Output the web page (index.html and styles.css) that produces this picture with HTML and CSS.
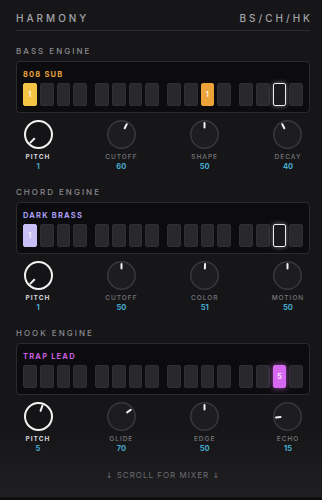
FILE: index.html
```html
<!DOCTYPE html>
<html lang="en">
<head>
    <meta charset="UTF-8">
    <meta name="viewport" content="width=device-width, initial-scale=1.0">
    <title>Harmony</title>
    <link rel="stylesheet" href="styles.css">
</head>
<body>
    <div class="app">
        <header class="top">
            <span>HARMONY</span>
            <span>BS/CH/HK</span>
        </header>

        <section class="engine">
            <h3 class="engine-title">BASS ENGINE</h3>
            <div class="pattern">
                <div class="patch bass">808 SUB</div>
                <div class="steps">
                    <div class="group"><div class="step yellow">1</div><div class="step"></div><div class="step"></div><div class="step"></div></div>
                    <div class="group"><div class="step"></div><div class="step"></div><div class="step"></div><div class="step"></div></div>
                    <div class="group"><div class="step"></div><div class="step"></div><div class="step orange">1</div><div class="step"></div></div>
                    <div class="group"><div class="step"></div><div class="step"></div><div class="step playhead"></div><div class="step"></div></div>
                </div>
            </div>
            <div class="knobs">
                <div class="knob active">
                    <svg viewBox="0 0 29 29"><circle cx="14.5" cy="14.5" r="13.5"/><line x1="14.5" y1="3" x2="14.5" y2="8.5" transform="rotate(-135 14.5 14.5)"/></svg>
                    <span class="k-label">PITCH</span><span class="k-value">1</span>
                </div>
                <div class="knob">
                    <svg viewBox="0 0 29 29"><circle cx="14.5" cy="14.5" r="13.75"/><line x1="14.5" y1="3" x2="14.5" y2="7.5" transform="rotate(27 14.5 14.5)"/></svg>
                    <span class="k-label">CUTOFF</span><span class="k-value">60</span>
                </div>
                <div class="knob">
                    <svg viewBox="0 0 29 29"><circle cx="14.5" cy="14.5" r="13.75"/><line x1="14.5" y1="3" x2="14.5" y2="7.5"/></svg>
                    <span class="k-label">SHAPE</span><span class="k-value">50</span>
                </div>
                <div class="knob">
                    <svg viewBox="0 0 29 29"><circle cx="14.5" cy="14.5" r="13.75"/><line x1="14.5" y1="3" x2="14.5" y2="7.5" transform="rotate(-27 14.5 14.5)"/></svg>
                    <span class="k-label">DECAY</span><span class="k-value">40</span>
                </div>
            </div>
        </section>

        <section class="engine">
            <h3 class="engine-title">CHORD ENGINE</h3>
            <div class="pattern">
                <div class="patch chord">DARK BRASS</div>
                <div class="steps">
                    <div class="group"><div class="step lavender">1</div><div class="step"></div><div class="step"></div><div class="step"></div></div>
                    <div class="group"><div class="step"></div><div class="step"></div><div class="step"></div><div class="step"></div></div>
                    <div class="group"><div class="step"></div><div class="step"></div><div class="step"></div><div class="step"></div></div>
                    <div class="group"><div class="step"></div><div class="step"></div><div class="step playhead"></div><div class="step"></div></div>
                </div>
            </div>
            <div class="knobs">
                <div class="knob active">
                    <svg viewBox="0 0 29 29"><circle cx="14.5" cy="14.5" r="13.5"/><line x1="14.5" y1="3" x2="14.5" y2="8.5" transform="rotate(-135 14.5 14.5)"/></svg>
                    <span class="k-label">PITCH</span><span class="k-value">1</span>
                </div>
                <div class="knob">
                    <svg viewBox="0 0 29 29"><circle cx="14.5" cy="14.5" r="13.75"/><line x1="14.5" y1="3" x2="14.5" y2="7.5"/></svg>
                    <span class="k-label">CUTOFF</span><span class="k-value">50</span>
                </div>
                <div class="knob">
                    <svg viewBox="0 0 29 29"><circle cx="14.5" cy="14.5" r="13.75"/><line x1="14.5" y1="3" x2="14.5" y2="7.5" transform="rotate(3 14.5 14.5)"/></svg>
                    <span class="k-label">COLOR</span><span class="k-value">51</span>
                </div>
                <div class="knob">
                    <svg viewBox="0 0 29 29"><circle cx="14.5" cy="14.5" r="13.75"/><line x1="14.5" y1="3" x2="14.5" y2="7.5"/></svg>
                    <span class="k-label">MOTION</span><span class="k-value">50</span>
                </div>
            </div>
        </section>

        <section class="engine">
            <h3 class="engine-title">HOOK ENGINE</h3>
            <div class="pattern">
                <div class="patch hook">TRAP LEAD</div>
                <div class="steps">
                    <div class="group"><div class="step"></div><div class="step"></div><div class="step"></div><div class="step"></div></div>
                    <div class="group"><div class="step"></div><div class="step"></div><div class="step"></div><div class="step"></div></div>
                    <div class="group"><div class="step"></div><div class="step"></div><div class="step"></div><div class="step"></div></div>
                    <div class="group"><div class="step"></div><div class="step"></div><div class="step magenta">5</div><div class="step"></div></div>
                </div>
            </div>
            <div class="knobs">
                <div class="knob active">
                    <svg viewBox="0 0 29 29"><circle cx="14.5" cy="14.5" r="13.5"/><line x1="14.5" y1="3" x2="14.5" y2="8.5" transform="rotate(20 14.5 14.5)"/></svg>
                    <span class="k-label">PITCH</span><span class="k-value">5</span>
                </div>
                <div class="knob">
                    <svg viewBox="0 0 29 29"><circle cx="14.5" cy="14.5" r="13.75"/><line x1="14.5" y1="3" x2="14.5" y2="7.5" transform="rotate(54 14.5 14.5)"/></svg>
                    <span class="k-label">GLIDE</span><span class="k-value">70</span>
                </div>
                <div class="knob">
                    <svg viewBox="0 0 29 29"><circle cx="14.5" cy="14.5" r="13.75"/><line x1="14.5" y1="3" x2="14.5" y2="7.5"/></svg>
                    <span class="k-label">EDGE</span><span class="k-value">50</span>
                </div>
                <div class="knob">
                    <svg viewBox="0 0 29 29"><circle cx="14.5" cy="14.5" r="13.75"/><line x1="14.5" y1="3" x2="14.5" y2="7.5" transform="rotate(-95 14.5 14.5)"/></svg>
                    <span class="k-label">ECHO</span><span class="k-value">15</span>
                </div>
            </div>
        </section>

        <div class="scroll-hint"><span class="arrow">↓</span> SCROLL FOR MIXER <span class="arrow">↓</span></div>
    </div>
</body>
</html>
```

FILE: styles.css
```css
* {
    box-sizing: border-box;
}
body {
    margin: 0;
    padding: 0;
    background: #161618;
    font-family: Inter, 'Noto Sans', sans-serif;
    color: #e8e8ea;
}
.app {
    min-height: 500px;
    padding: 12px 12px 0 16px;
    background: linear-gradient(180deg, #161618 430px, #1f1f22 497px, #0c0c0e 498px);
}
.top {
    display: flex;
    justify-content: space-between;
    padding-bottom: 6px;
    border-bottom: 1px solid #2c2c30;
    font-size: 10px;
    line-height: 12px;
    letter-spacing: 3px;
    font-weight: 500;
    color: #a3a3a9;
}
.top span:last-child {
    margin-right: -3px;
}
.engine {
    margin-top: 15px;
}
.engine + .engine {
    margin-top: 15.5px;
}
.engine-title {
    margin: 0 0 5px;
    font-size: 8px;
    line-height: 10px;
    letter-spacing: 2px;
    font-weight: 500;
    color: #8a8a90;
}
.pattern {
    background: #0c0c0e;
    border: 1px solid #2b2b2f;
    border-radius: 4px;
    padding: 7.5px 6px 6px;
}
.patch {
    font-size: 7.5px;
    line-height: 9px;
    font-weight: 700;
    letter-spacing: 1.2px;
    margin-bottom: 4px;
}
.patch.bass { color: #e8a23a; }
.patch.chord { color: #a99ff4; }
.patch.hook { color: #c55ddf; }
.steps {
    display: flex;
    gap: 8px;
}
.group {
    flex: 1;
    display: flex;
    gap: 3px;
}
.step {
    flex: 1;
    height: 23px;
    border-radius: 2px;
    background: #29292d;
    border: 1px solid #303034;
    display: flex;
    align-items: center;
    justify-content: center;
    font-size: 7px;
    font-weight: 700;
    color: rgba(255, 255, 255, 0.85);
}
.step.yellow {
    background: #f4c445;
    border-color: #f4c445;
}
.step.orange {
    background: #eba33a;
    border-color: #eba33a;
}
.step.lavender {
    background: #c7bff6;
    border-color: #c7bff6;
}
.step.magenta {
    background: #d768f2;
    border-color: #d768f2;
    box-shadow: 0 0 6px rgba(215, 104, 242, 0.7);
}
.step.playhead {
    background: #1b1b1f;
    border: 1.5px solid #ececec;
    box-shadow: 0 0 5px rgba(255, 255, 255, 0.45);
}
.knobs {
    display: flex;
    justify-content: space-between;
    margin-top: 7px;
}
.knob {
    width: 44px;
    display: flex;
    flex-direction: column;
    align-items: center;
}
.knob svg {
    width: 29px;
    height: 29px;
    display: block;
}
.knob circle {
    fill: #1d1d21;
    stroke: #38383d;
    stroke-width: 1.5;
}
.knob line {
    stroke: #f2f2f2;
    stroke-width: 2;
    stroke-linecap: round;
}
.knob.active circle {
    fill: #141417;
    stroke: #f2f2f2;
    stroke-width: 2;
}
.k-label {
    margin-top: 3px;
    font-size: 6.5px;
    line-height: 10px;
    letter-spacing: 1px;
    font-weight: 500;
    color: #77777d;
    white-space: nowrap;
}
.knob.active .k-label {
    color: #d6d6d8;
    font-weight: 700;
}
.k-value {
    font-size: 7.5px;
    line-height: 10px;
    font-weight: 700;
    color: #46abcf;
}
.scroll-hint {
    margin-top: 16px;
    text-align: center;
    font-size: 8px;
    line-height: 10px;
    letter-spacing: 1px;
    color: #6d6d73;
}
.scroll-hint .arrow {
    font-family: 'DejaVu Sans', sans-serif;
    color: #6d6d73;
}
```
